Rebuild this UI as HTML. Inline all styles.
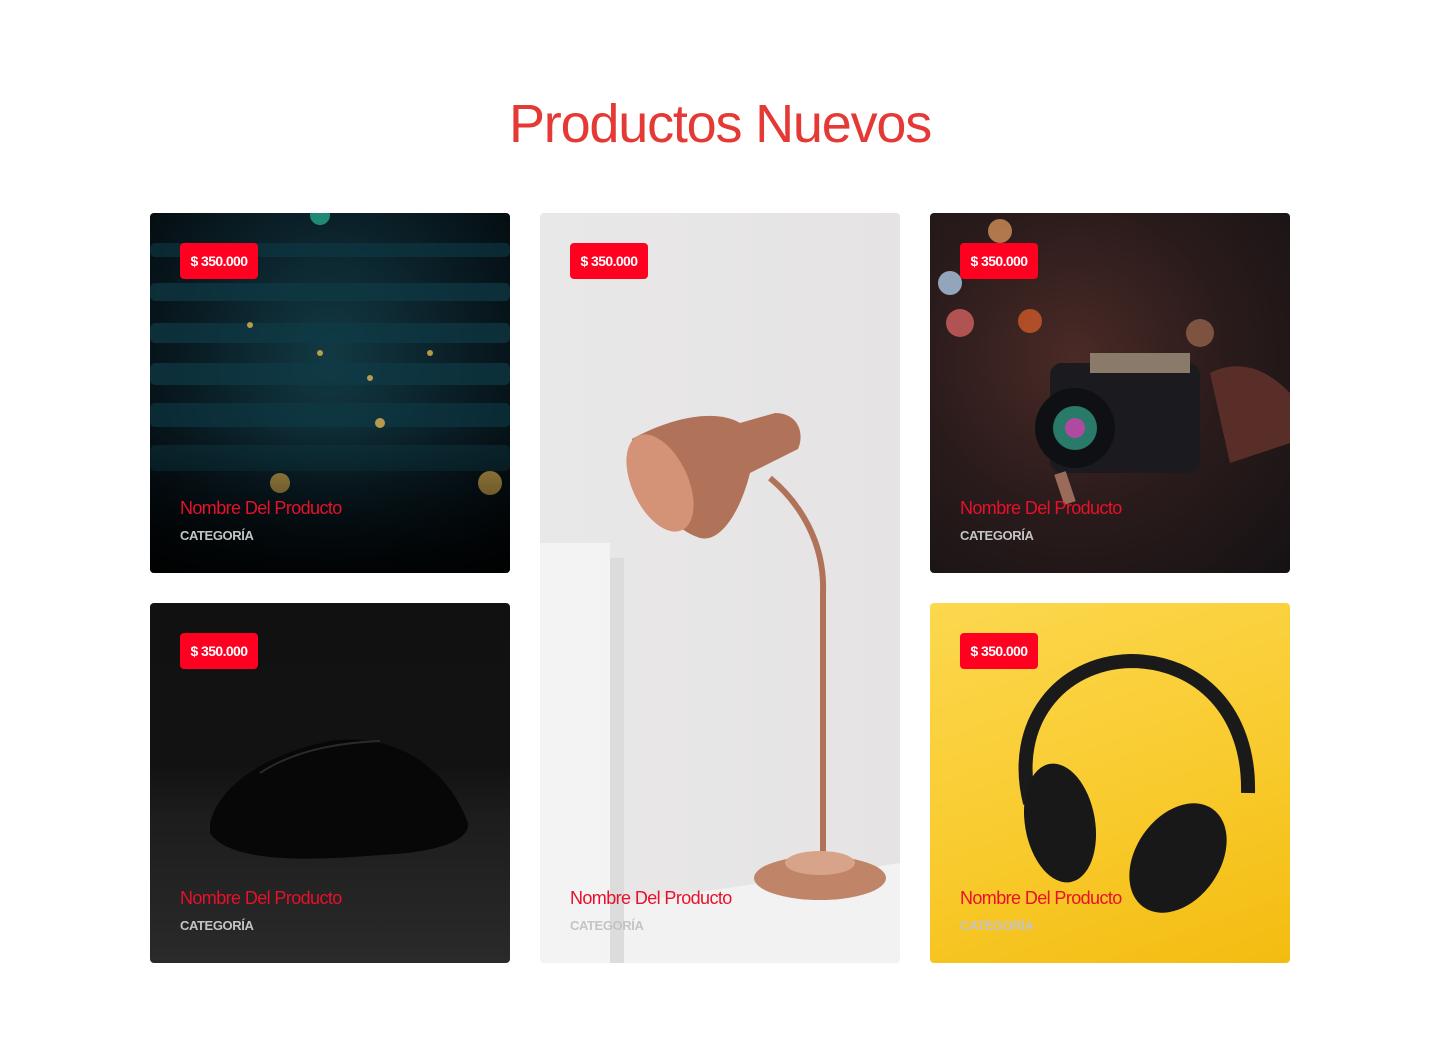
<!DOCTYPE html>
<html><head><meta charset="utf-8"><style>
*{margin:0;padding:0;box-sizing:border-box}
body{width:1440px;height:1053px;background:#fff;font-family:"Liberation Sans",Arial,sans-serif;position:relative;overflow:hidden}
h1{position:absolute;top:93px;left:0;width:1440px;text-align:center;font-weight:400;font-size:54px;color:#e53935;letter-spacing:-1.2px}
.card{position:absolute;width:360px;height:360px;border-radius:4px;overflow:hidden}
.badge{position:absolute;left:30px;top:30px;width:78px;height:36px;background:#ff0021;border-radius:4px;color:#fff;font-weight:700;font-size:14px;line-height:36px;text-align:center;letter-spacing:-0.6px;z-index:3}
.name{position:absolute;left:30px;bottom:54px;color:#e8102a;font-size:18px;letter-spacing:-0.6px;z-index:3}
.cat{position:absolute;left:30px;bottom:30px;color:#c4c4c4;font-size:13px;font-weight:700;letter-spacing:-0.4px;z-index:3}
.art{position:absolute;inset:0}
</style></head><body>
<h1>Productos Nuevos</h1>

<div class="card" style="left:150px;top:213px;background:radial-gradient(ellipse at 50% 40%,#123a44 0%,#0a1e26 50%,#020609 100%)">
<svg class="art" width="360" height="360">
<defs><linearGradient id="fk" x1="0" y1="0" x2="0" y2="1"><stop offset="0.6" stop-color="#000" stop-opacity="0"/><stop offset="1" stop-color="#000" stop-opacity="0.85"/></linearGradient></defs>
<g fill="#0e3a46">
<rect x="0" y="30" width="360" height="14" rx="5" opacity=".6"/>
<rect x="0" y="70" width="360" height="18" rx="5" opacity=".7"/>
<rect x="0" y="110" width="360" height="20" rx="5" opacity=".7"/>
<rect x="0" y="150" width="360" height="22" rx="5" opacity=".7"/>
<rect x="0" y="190" width="360" height="24" rx="5" opacity=".6"/>
<rect x="0" y="232" width="360" height="26" rx="5" opacity=".5"/>
</g>
<g fill="#e2b453" opacity=".8"><circle cx="100" cy="112" r="3"/><circle cx="170" cy="140" r="3"/><circle cx="220" cy="165" r="3"/><circle cx="280" cy="140" r="3"/><circle cx="230" cy="210" r="5"/><circle cx="130" cy="270" r="10"/><circle cx="340" cy="270" r="12"/></g>
<circle cx="170" cy="2" r="10" fill="#2fd0a8" opacity=".6"/>
<rect width="360" height="360" fill="url(#fk)"/>
</svg>
<div class="badge">$ 350.000</div><div class="name">Nombre Del Producto</div><div class="cat">CATEGORÍA</div></div>

<div class="card" style="left:540px;top:213px;height:750px;background:linear-gradient(90deg,#e9e8e8,#e5e3e4)">
<svg class="art" width="360" height="750">
<rect x="0" y="330" width="70" height="420" fill="#f3f3f3"/><rect x="70" y="345" width="14" height="405" fill="#dcdcdc"/>
<polygon points="84,690 360,650 360,750 84,750" fill="#f2f2f2"/>
<path d="M92,226 C140,200 180,198 200,210 L235,200 C258,200 265,220 258,236 L210,260 C200,300 180,330 160,325 C130,315 100,280 92,226Z" fill="#b0735a"/>
<ellipse cx="120" cy="270" rx="28" ry="52" transform="rotate(-25 120 270)" fill="#d49276"/>
<path d="M230,265 C260,290 285,330 283,380 L283,660" stroke="#b0735a" stroke-width="6" fill="none"/>
<ellipse cx="280" cy="665" rx="66" ry="22" fill="#c08468"/><ellipse cx="280" cy="650" rx="35" ry="12" fill="#d8a489"/>
</svg>
<div class="badge">$ 350.000</div><div class="name">Nombre Del Producto</div><div class="cat">CATEGORÍA</div></div>

<div class="card" style="left:930px;top:213px;background:radial-gradient(ellipse at 40% 40%,#4a2a26 0%,#2a1b1b 50%,#151214 100%)">
<svg class="art" width="360" height="360">
<g opacity=".7"><circle cx="70" cy="18" r="12" fill="#e8a060"/><circle cx="30" cy="110" r="14" fill="#e86a6a"/><circle cx="100" cy="108" r="12" fill="#e0602a"/><circle cx="20" cy="70" r="12" fill="#bfe0ff"/><circle cx="270" cy="120" r="14" fill="#a06a50"/></g>
<path d="M280,160 C320,140 350,170 360,180 L360,230 L300,250Z" fill="#5a2e28"/>
<rect x="120" y="150" width="150" height="110" rx="12" fill="#1b1b1f"/>
<rect x="160" y="140" width="100" height="20" fill="#8a7a6a"/>
<circle cx="145" cy="215" r="40" fill="#0f1014"/><circle cx="145" cy="215" r="22" fill="#2a7a6a"/><circle cx="145" cy="215" r="10" fill="#b04aa0"/>
<path d="M130,260 L140,290" stroke="#9a6a5a" stroke-width="12"/>
</svg>
<div class="badge">$ 350.000</div><div class="name">Nombre Del Producto</div><div class="cat">CATEGORÍA</div></div>

<div class="card" style="left:150px;top:603px;background:linear-gradient(180deg,#111 0%,#121212 45%,#1d1d1d 60%,#2a2a2a 100%)">
<svg class="art" width="360" height="360">
<path d="M60,220 C70,180 120,150 180,138 C250,128 300,170 318,220 C320,240 280,250 230,252 C160,258 80,260 60,230Z" fill="#070707"/>
<path d="M110,170 C140,150 180,140 230,138" stroke="#2a2a2a" stroke-width="2" fill="none"/>
</svg>
<div class="badge">$ 350.000</div><div class="name">Nombre Del Producto</div><div class="cat">CATEGORÍA</div></div>

<div class="card" style="left:930px;top:603px;background:linear-gradient(160deg,#fcd84f 0%,#f8c92a 60%,#f3bc10 100%)">
<svg class="art" width="360" height="360">
<path d="M100,200 C80,120 130,60 200,58 C270,58 320,110 318,190" stroke="#1a1a1a" stroke-width="14" fill="none"/>
<ellipse cx="130" cy="220" rx="35" ry="60" transform="rotate(-10 130 220)" fill="#181818"/>
<ellipse cx="248" cy="255" rx="42" ry="60" transform="rotate(35 248 255)" fill="#181818"/>
</svg>
<div class="badge">$ 350.000</div><div class="name">Nombre Del Producto</div><div class="cat">CATEGORÍA</div></div>
</body></html>
